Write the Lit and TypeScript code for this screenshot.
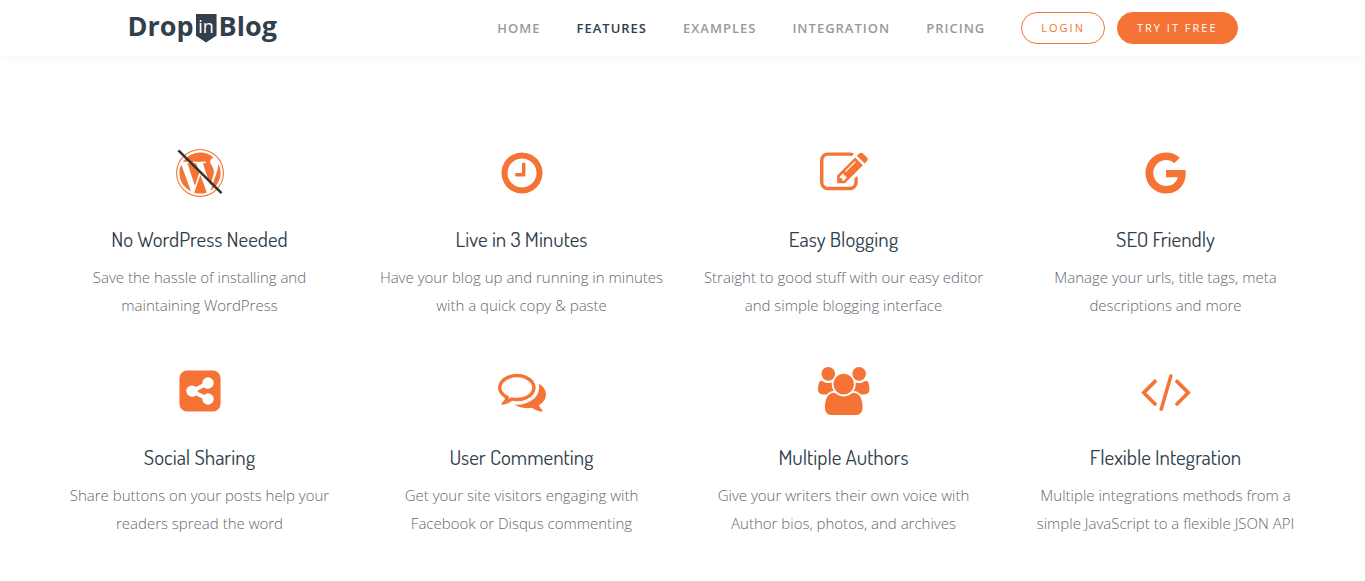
import { LitElement, html, css, svg } from "lit";
import { customElement, property } from "lit/decorators.js";
import { classMap } from "lit/directives/class-map.js";

type IconName = "wordpress" | "clock" | "edit" | "google" | "share" | "comments" | "users" | "code";

interface Glyph {
  width: number;
  path: string;
}

// Glyph outlines share one scale: 1792 units to the icon height.
const GLYPHS: Record<IconName, Glyph> = {
  wordpress: {
    width: 1792,
    path: "M127 896q0-163 67-313l367 1005q-196-95-315-281t-119-411zm1288-39q0 19-2.5 38.5t-10 49.5-11.5 44-17.5 59-17.5 58l-76 256-278-826q46-3 88-8 19-2 26-18.5t-2.5-31-28.5-13.5l-205 10q-75-1-202-10-12-1-20.5 5t-11.5 15-1.5 18.5 9 16.5 19.5 8l80 8 120 328-168 504-280-832q46-3 88-8 19-2 26-18.5t-2.5-31-28.5-13.5l-205 10q-7 0-23-.5t-26-.5q105-160 274.5-253.5t367.5-93.5q147 0 280.5 53t238.5 149h-10q-55 0-92 40.5t-37 95.5q0 12 2 24t4 21.5 8 23 9 21 12 22.5 12.5 21 14.5 24 14 23q63 107 63 212zm-506 106l237 647q1 6 5 11-126 44-255 44-112 0-217-32zm661-436q95 174 95 369 0 209-104 385.5t-279 278.5l235-678q59-169 59-276 0-42-6-79zm-674-527q182 0 348 71t286 191 191 286 71 348-71 348-191 286-286 191-348 71-348-71-286-191-191-286-71-348 71-348 191-286 286-191 348-71zm0 1751q173 0 331.5-68t273-182.5 182.5-273 68-331.5-68-331.5-182.5-273-273-182.5-331.5-68-331.5 68-273 182.5-182.5 273-68 331.5 68 331.5 182.5 273 273 182.5 331.5 68z",
  },
  clock: {
    width: 1792,
    path: "M1024 544v448q0 14-9 23t-23 9h-320q-14 0-23-9t-9-23v-64q0-14 9-23t23-9h224v-352q0-14 9-23t23-9h64q14 0 23 9t9 23zm416 352q0-148-73-273t-198-198-273-73-273 73-198 198-73 273 73 273 198 198 273 73 273-73 198-198 73-273zm224 0q0 209-103 385.5t-279.5 279.5-385.5 103-385.5-103-279.5-279.5-103-385.5 103-385.5 279.5-279.5 385.5-103 385.5 103 279.5 279.5 103 385.5z",
  },
  edit: {
    width: 1792,
    path: "M888 1184l116-116-152-152-116 116v56h96v96h56zm440-720q-16-16-33 1l-350 350q-17 17-1 33t33-1l350-350q17-17 1-33zm80 594v190q0 119-84.5 203.5t-203.5 84.5h-832q-119 0-203.5-84.5t-84.5-203.5v-832q0-119 84.5-203.5t203.5-84.5h832q63 0 117 25 15 7 18 23 3 17-9 29l-49 49q-14 14-32 8-23-6-45-6h-832q-66 0-113 47t-47 113v832q0 66 47 113t113 47h832q66 0 113-47t47-113v-126q0-13 9-22l64-64q15-15 35-7t20 29zm-96-738l288 288-672 672h-288v-288zm444 132l-92 92-288-288 92-92q28-28 68-28t68 28l152 152q28 28 28 68t-28 68z",
  },
  google: {
    width: 1792,
    path: "M896 786h725q12 67 12 128 0 217-91 387.5t-259.5 266.5-386.5 96q-157 0-299-60.5t-245-163.5-163.5-245-60.5-299 60.5-299 163.5-245 245-163.5 299-60.5q300 0 515 201l-209 201q-123-119-306-119-129 0-238.5 65t-173.5 176.5-64 243.5 64 243.5 173.5 176.5 238.5 65q87 0 160-24t120-60 82-82 51.5-87 22.5-78h-436v-264z",
  },
  share: {
    width: 1792,
    path: "M1408 1198q0-88-62.5-151t-150.5-63q-84 0-145 58l-241-120q2-16 2-23t-2-23l241-120q61 58 145 58 88 0 150.5-63t62.5-151-62.5-150.5-150.5-62.5-151 62.5-63 150.5q0 7 2 23l-241 120q-62-57-145-57-88 0-150.5 62.5t-62.5 150.5 62.5 150.5 150.5 62.5q83 0 145-57l241 120q-2 16-2 23 0 88 63 150.5t151 62.5 150.5-62.5 62.5-150.5zm256-782v960q0 119-84.5 203.5t-203.5 84.5h-960q-119 0-203.5-84.5t-84.5-203.5v-960q0-119 84.5-203.5t203.5-84.5h960q119 0 203.5 84.5t84.5 203.5z",
  },
  comments: {
    width: 1792,
    path: "M704 384q-153 0-286 52t-211.5 141-78.5 191q0 82 53 158t149 132l97 56-35 84q34-20 62-39l44-31 53 10q78 14 153 14 153 0 286-52t211.5-141 78.5-191-78.5-191-211.5-141-286-52zm0-128q191 0 353.5 68.5t256.5 186.5 94 257-94 257-256.5 186.5-353.5 68.5q-86 0-176-16-124 88-278 128-36 9-86 16h-3q-11 0-20.5-8t-11.5-21q-1-3-1-6.5t.5-6.5 2-6l2.5-5 3.5-5.5 4-5 4.5-5 4-4.5q5-6 23-25t26-29.5 22.5-29 25-38.5 20.5-44q-124-72-195-177t-71-224q0-139 94-257t256.5-186.5 353.5-68.5zm822 1169q10 24 20.5 44t25 38.5 22.5 29 26 29.5 23 25q1 1 4 4.5t4.5 5 4 5 3.5 5.5l2.5 5 2 6 .5 6.5-1 6.5q-3 14-13 22t-22 7q-50-7-86-16-154-40-278-128-90 16-176 16-271 0-472-132 58 4 88 4 161 0 309-45t264-129q125-92 192-212t67-254q0-77-23-152 129 71 204 178t75 230q0 120-71 224.5t-195 176.5z",
  },
  users: {
    width: 1920,
    path: "M593 896q-162 5-265 128h-134q-82 0-138-40.5t-56-118.5q0-353 124-353 6 0 43.5 21t97.5 42.5 119 21.5q67 0 133-23-5 37-5 66 0 139 81 256zm1071 637q0 120-73 189.5t-194 69.5h-874q-121 0-194-69.5t-73-189.5q0-53 3.5-103.5t14-109 26.5-108.5 43-97.5 62-81 85.5-53.5 111.5-20q10 0 43 21.5t73 48 107 48 135 21.5 135-21.5 107-48 73-48 43-21.5q61 0 111.5 20t85.5 53.5 62 81 43 97.5 26.5 108.5 14 109 3.5 103.5zm-1024-1277q0 106-75 181t-181 75-181-75-75-181 75-181 181-75 181 75 75 181zm704 384q0 159-112.5 271.5t-271.5 112.5-271.5-112.5-112.5-271.5 112.5-271.5 271.5-112.5 271.5 112.5 112.5 271.5zm576 225q0 78-56 118.5t-138 40.5h-134q-103-123-265-128 81-117 81-256 0-29-5-66 66 23 133 23 59 0 119-21.5t97.5-42.5 43.5-21q124 0 124 353zm-128-609q0 106-75 181t-181 75-181-75-75-181 75-181 181-75 181 75 75 181z",
  },
  code: {
    width: 1792,
    path: "M553 1399l-50 50q-10 10-23 10t-23-10l-466-466q-10-10-10-23t10-23l466-466q10-10 23-10t23 10l50 50q10 10 10 23t-10 23l-393 393 393 393q10 10 10 23t-10 23zm591-1067l-373 1291q-4 13-15.5 19.5t-23.5 2.5l-62-17q-13-4-19.5-15.5t-2.5-24.5l373-1291q4-13 15.5-19.5t23.5-2.5l62 17q13 4 19.5 15.5t2.5 24.5zm657 651l-466 466q-10 10-23 10t-23-10l-50-50q-10-10-10-23t10-23l393-393-393-393q-10-10-10-23t10-23l50-50q10-10 23-10t23 10l466 466q10 10 10 23t-10 23z",
  },
};

interface Feature {
  icon: IconName;
  title: string;
  text: string;
}

const FEATURES: Feature[] = [
  { icon: "wordpress", title: "No WordPress Needed", text: "Save the hassle of installing and maintaining WordPress" },
  { icon: "clock", title: "Live in 3 Minutes", text: "Have your blog up and running in minutes with a quick copy & paste" },
  { icon: "edit", title: "Easy Blogging", text: "Straight to good stuff with our easy editor and simple blogging interface" },
  { icon: "google", title: "SEO Friendly", text: "Manage your urls, title tags, meta descriptions and more" },
  { icon: "share", title: "Social Sharing", text: "Share buttons on your posts help your readers spread the word" },
  { icon: "comments", title: "User Commenting", text: "Get your site visitors engaging with Facebook or Disqus commenting" },
  { icon: "users", title: "Multiple Authors", text: "Give your writers their own voice with Author bios, photos, and archives" },
  { icon: "code", title: "Flexible Integration", text: "Multiple integrations methods from a simple JavaScript to a flexible JSON API" },
];

const LINKS = ["Home", "Features", "Examples", "Integration", "Pricing"];

@customElement("feature-card")
export class FeatureCard extends LitElement {
  @property({ attribute: false }) feature!: Feature;

  static styles = css`
    :host {
      display: flex;
      flex-direction: column;
      align-items: center;
      padding: 0 15px;
      text-align: center;
    }
    .icon {
      display: block;
      height: 48px;
      overflow: visible;
      fill: #f57334;
    }
    .slash {
      stroke: #333;
      stroke-width: 96;
    }
    .title {
      margin: 28px 0 10px;
      font: 400 21px/28px Dosis, Roboto, sans-serif;
      color: #303d4a;
    }
    .text {
      margin: 0;
      font: 300 15px/28px "Open Sans", sans-serif;
      color: #5f6870;
    }
  `;

  render() {
    const { icon, title, text } = this.feature;
    const glyph = GLYPHS[icon];
    return html`
      <svg class="icon" viewBox="0 0 ${glyph.width} 1792" aria-hidden="true">
        <path d=${glyph.path}></path>
        ${icon === "wordpress" ? svg`<path class="slash" d="M90 50L1700 1650"></path>` : null}
      </svg>
      <h2 class="title">${title}</h2>
      <p class="text">${text}</p>
    `;
  }
}

@customElement("app-root")
export class AppRoot extends LitElement {
  static styles = css`
    :host {
      display: block;
      min-height: 100vh;
      background: #fff;
      font-family: "Open Sans", sans-serif;
    }
    .header {
      box-shadow: 0 0 12px rgba(0, 0, 0, 0.06);
    }
    .bar {
      display: flex;
      align-items: center;
      justify-content: space-between;
      height: 56px;
      max-width: 1110px;
      margin: 0 auto;
    }
    .logo {
      display: flex;
      align-items: center;
      gap: 2px;
      color: #333f4a;
      text-decoration: none;
    }
    .word {
      padding-bottom: 4px;
      font: 700 27px/36px "Open Sans", sans-serif;
    }
    .shield {
      width: 21px;
      height: 29px;
      background: #333f4a;
      clip-path: polygon(0 0, 100% 0, 100% 76%, 50% 100%, 0 76%);
      color: #fff;
      font: 400 18px/25px "Open Sans", sans-serif;
      text-align: center;
    }
    .nav {
      display: flex;
      align-items: center;
      gap: 36px;
    }
    .links {
      display: flex;
      gap: 36px;
    }
    .link {
      color: #999;
      font-size: 13px;
      font-weight: 600;
      letter-spacing: 1px;
      line-height: 20px;
      text-decoration: none;
      text-transform: uppercase;
    }
    .active {
      color: #303d4a;
    }
    .actions {
      display: flex;
      gap: 12px;
    }
    .pill {
      padding: 0 19px;
      border: 1px solid #f57334;
      border-radius: 16px;
      color: #f57334;
      font-size: 11px;
      font-weight: 500;
      letter-spacing: 2px;
      line-height: 30px;
      text-decoration: none;
      text-transform: uppercase;
    }
    .solid {
      background: #f57334;
      color: #fff;
    }
    .features {
      display: grid;
      grid-template-columns: repeat(4, 1fr);
      row-gap: 48px;
      max-width: 1288px;
      margin: 0 auto;
      padding: 93px 0 40px;
    }
  `;

  render() {
    return html`
      <header class="header">
        <div class="bar">
          <a class="logo" href="#" aria-label="DropInBlog">
            <span class="word">Drop</span><span class="shield">in</span><span class="word">Blog</span>
          </a>
          <nav class="nav">
            <div class="links">
              ${LINKS.map(
                (label) => html`<a class=${classMap({ link: true, active: label === "Features" })} href="#">${label}</a>`
              )}
            </div>
            <div class="actions">
              <a class="pill" href="#">Login</a>
              <a class="pill solid" href="#">Try it free</a>
            </div>
          </nav>
        </div>
      </header>
      <main class="features">
        ${FEATURES.map((feature) => html`<feature-card .feature=${feature}></feature-card>`)}
      </main>
    `;
  }
}
